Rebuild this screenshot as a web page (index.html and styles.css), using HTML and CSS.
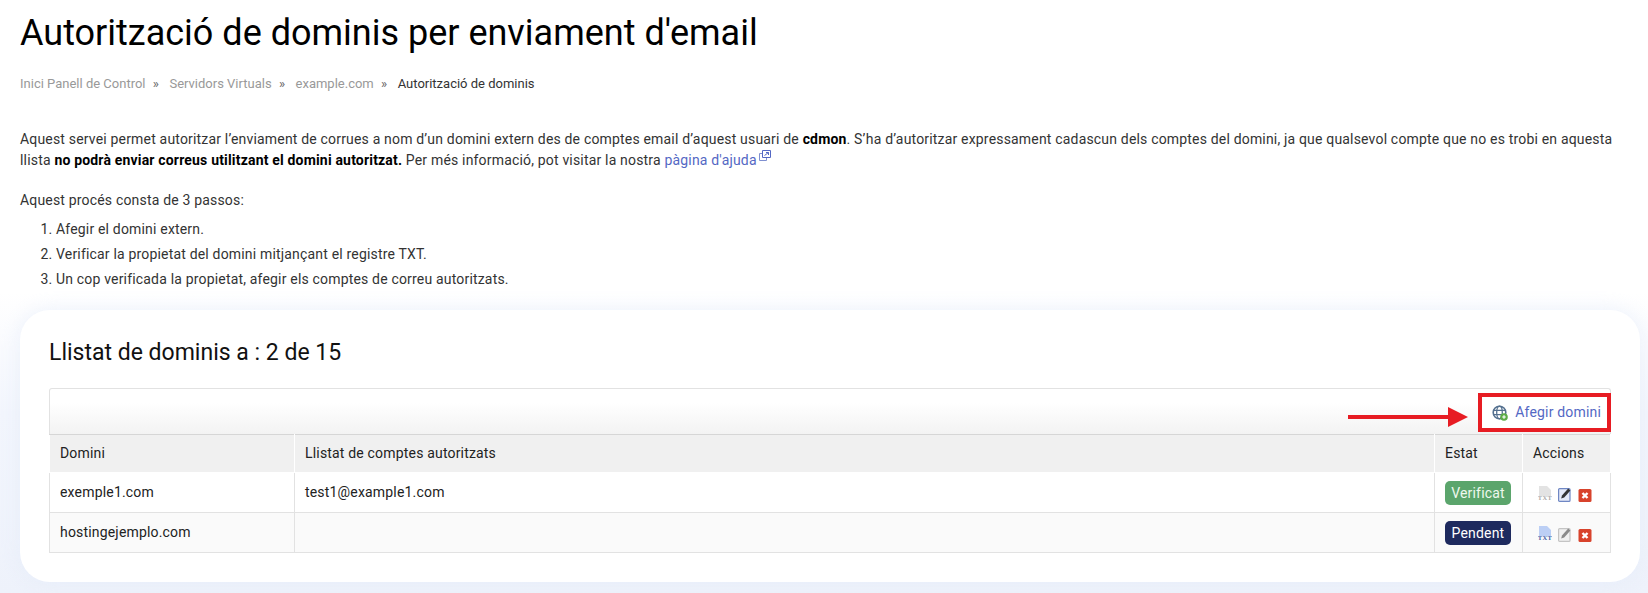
FILE: index.html
```html
<!DOCTYPE html>
<html lang="ca">
<head>
    <meta charset="UTF-8">
    <title>Autorització de dominis</title>
    <link rel="stylesheet" href="styles.css">
</head>
<body>
    <h1 class="title">Autorització de dominis per enviament d'email</h1>

    <div class="crumbs">
        <a>Inici Panell de Control</a><span class="sep">»</span>
        <a>Servidors Virtuals</a><span class="sep">»</span>
        <a>example.com</a><span class="sep">»</span>
        <span class="here">Autorització de dominis</span>
    </div>

    <p class="intro">Aquest servei permet autoritzar l’enviament de corrues a nom d’un domini extern des de comptes email d’aquest usuari de <b>cdmon</b>. S’ha d’autoritzar expressament cadascun dels comptes del domini, ja que qualsevol compte que no es trobi en aquesta llista <b>no podrà enviar correus utilitzant el domini autoritzat.</b> Per més informació, pot visitar la nostra <a class="link">pàgina d'ajuda</a><svg class="ext" viewBox="0 0 12 12" width="12" height="12"><path d="M0.5 3.5h7v7h-7z" fill="#fff" stroke="#7f8fd0"/><path d="M3.5 0.5h8v7h-8z" fill="#fff" stroke="#5468c4"/><path d="M5.5 5.5l4-3M7 2.5h2.5V5" fill="none" stroke="#5468c4"/></svg></p>

    <p class="steps-lead">Aquest procés consta de 3 passos:</p>
    <ol class="steps">
        <li>Afegir el domini extern.</li>
        <li>Verificar la propietat del domini mitjançant el registre TXT.</li>
        <li>Un cop verificada la propietat, afegir els comptes de correu autoritzats.</li>
    </ol>

    <div class="band">
        <div class="card">
            <h2 class="card-title">Llistat de dominis a : 2 de 15</h2>

            <div class="toolbar">
                <svg class="arrow" viewBox="0 0 120 20" width="120" height="20"><path d="M0 8h100V0l20 10-20 10v-8H0z" fill="#e71c23"/></svg>
                <a class="add">
                    <svg viewBox="0 0 16 16" width="16" height="16">
                        <circle cx="7.5" cy="7.5" r="6.3" fill="none" stroke="#54708f" stroke-width="1.6"/>
                        <ellipse cx="7.5" cy="7.5" rx="2.8" ry="6.3" fill="none" stroke="#54708f" stroke-width="1.3"/>
                        <path d="M1 5.3h13M1 9.7h13" stroke="#54708f" stroke-width="1.3"/>
                        <circle cx="12" cy="12" r="3.8" fill="#5cab46"/>
                        <path d="M10.2 12h3.6M12 10.2v3.6" stroke="#fff" stroke-width="1.2"/>
                    </svg>
                    Afegir domini
                </a>
            </div>

            <table class="domains">
                <thead>
                    <tr><th class="c-dom">Domini</th><th>Llistat de comptes autoritzats</th><th class="c-state">Estat</th><th class="c-act">Accions</th></tr>
                </thead>
                <tbody>
                    <tr>
                        <td>exemple1.com</td>
                        <td>test1@example1.com</td>
                        <td><span class="tag ok">Verificat</span></td>
                        <td>
                            <div class="icons">
                                <svg viewBox="0 0 14 16" width="14" height="16"><path d="M1 0h8l4 4v6H1z" fill="#e3e3e3"/><text x="7" y="14" class="txt off">TXT</text></svg>
                                <svg viewBox="0 0 14 16" width="14" height="16"><rect x="0.6" y="2.6" width="11.4" height="12.8" rx="1" fill="#e4e9f7" stroke="#6f87c4" stroke-width="1.2"/><path d="M3.2 12.4l.8-2.8 6.2-7 2.2 2-6.2 7z" fill="#333"/></svg>
                                <svg viewBox="0 0 14 16" width="14" height="16"><rect x="0.5" y="3" width="13" height="13" rx="1.5" fill="#d8432c"/><path d="M4.5 7l5 5M9.5 7l-5 5" stroke="#fff" stroke-width="2.4"/></svg>
                            </div>
                        </td>
                    </tr>
                    <tr>
                        <td>hostingejemplo.com</td>
                        <td></td>
                        <td><span class="tag wait">Pendent</span></td>
                        <td>
                            <div class="icons">
                                <svg viewBox="0 0 14 16" width="14" height="16"><path d="M1 0h8l4 4v6H1z" fill="#bccff5"/><text x="7" y="14" class="txt on">TXT</text></svg>
                                <svg viewBox="0 0 14 16" width="14" height="16"><rect x="0.6" y="2.6" width="11.4" height="12.8" rx="1" fill="#f0f0f0" stroke="#c4c4c4" stroke-width="1.2"/><path d="M3.2 12.4l.8-2.8 6.2-7 2.2 2-6.2 7z" fill="#8a8a8a"/></svg>
                                <svg viewBox="0 0 14 16" width="14" height="16"><rect x="0.5" y="3" width="13" height="13" rx="1.5" fill="#d8432c"/><path d="M4.5 7l5 5M9.5 7l-5 5" stroke="#fff" stroke-width="2.4"/></svg>
                            </div>
                        </td>
                    </tr>
                </tbody>
            </table>
        </div>
    </div>
</body>
</html>
```

FILE: styles.css
```css
html, body{
    margin: 0;
    height: 593px;
    overflow: hidden;
}

body{
    background: #fff;
    color: #333;
    font-family: Roboto, sans-serif;
    font-size: 14px;
    line-height: 21px;
    letter-spacing: .18px;
}

.title{
    margin: 0;
    padding: 11px 20px 0;
    color: #000;
    font-size: 36px;
    font-weight: 400;
    line-height: 44px;
    letter-spacing: 0;
}

.crumbs{
    margin: 19px 0 0 20px;
    color: #999;
    font-size: 13px;
    line-height: 20px;
    letter-spacing: 0;
}

.crumbs .sep{
    margin: 0 7.3px;
    color: #666;
}

.crumbs .here{
    color: #333;
}

.intro{
    margin: 35px 20px 0;
    width: 1600px;
}

.intro b{
    color: #000;
}

.link{
    color: #5468c4;
}

.ext{
    margin-left: 2px;
    vertical-align: 3px;
}

.steps-lead{
    margin: 19px 20px 0;
}

.steps{
    margin: 6px 0 0;
    padding-left: 56px;
}

.steps li{
    line-height: 25px;
}

.band{
    padding: 18px 8px 12px 20px;
    background: linear-gradient(#fff, #f3f6fd 40%, #eef2fb);
}

.card{
    width: 1562px;
    height: 272px;
    padding: 0 29px;
    background: #fff;
    border-radius: 30px;
    box-shadow: 0 0 20px rgba(225, 233, 248, .6);
}

.card-title{
    margin: 0;
    padding-top: 25px;
    color: #111;
    font-size: 23px;
    font-weight: 400;
    line-height: 36px;
    letter-spacing: 0;
}

.toolbar{
    display: flex;
    justify-content: flex-end;
    align-items: center;
    gap: 10px;
    height: 46px;
    margin-top: 17px;
    padding-top: 2px;
    border: 1px solid #e2e2e2;
    border-bottom: 0;
    border-radius: 3px 3px 0 0;
    background: linear-gradient(#fff 30%, #f3f3f3);
    box-sizing: border-box;
}

.arrow{
    margin-top: 8px;
}

.add{
    display: flex;
    align-items: center;
    gap: 7px;
    height: 39px;
    margin-right: -1px;
    padding: 0 6px 0 10px;
    border: 4px solid #e71c23;
    box-sizing: border-box;
    color: #5468c4;
    background: #fff;
}

.domains{
    width: 100%;
    border-collapse: collapse;
    table-layout: fixed;
}

.domains th, .domains td{
    padding: 0 10px;
    border: 1px solid #e2e2e2;
    text-align: left;
    font-weight: 400;
    color: #222;
}

.domains th{
    height: 37px;
    background: #f0f0f0;
    border-color: #fff;
    border-top-color: #d6d6d6;
}

.domains td{
    height: 39px;
}

.domains tbody tr:nth-child(2){
    background: #fafafa;
}

.c-dom{
    width: 224px;
}

.c-state{
    width: 67px;
}

.c-act{
    width: 67px;
}

.tag{
    display: inline-block;
    min-width: 54px;
    padding: 0 6px;
    border-radius: 5px;
    line-height: 24px;
    text-align: center;
    color: #fff;
}

.tag.ok{
    background: #5ba56c;
    color: #eef8ee;
}

.tag.wait{
    background: #1e2a5e;
}

.icons{
    display: flex;
    gap: 6px;
    padding: 2px 0 0 5px;
}

.txt{
    font-family: "Liberation Serif", serif;
    font-size: 6.5px;
    font-weight: 700;
    letter-spacing: .4px;
    text-anchor: middle;
}

.txt.off{
    fill: #aaa;
}

.txt.on{
    fill: #3f5fa8;
}
```
